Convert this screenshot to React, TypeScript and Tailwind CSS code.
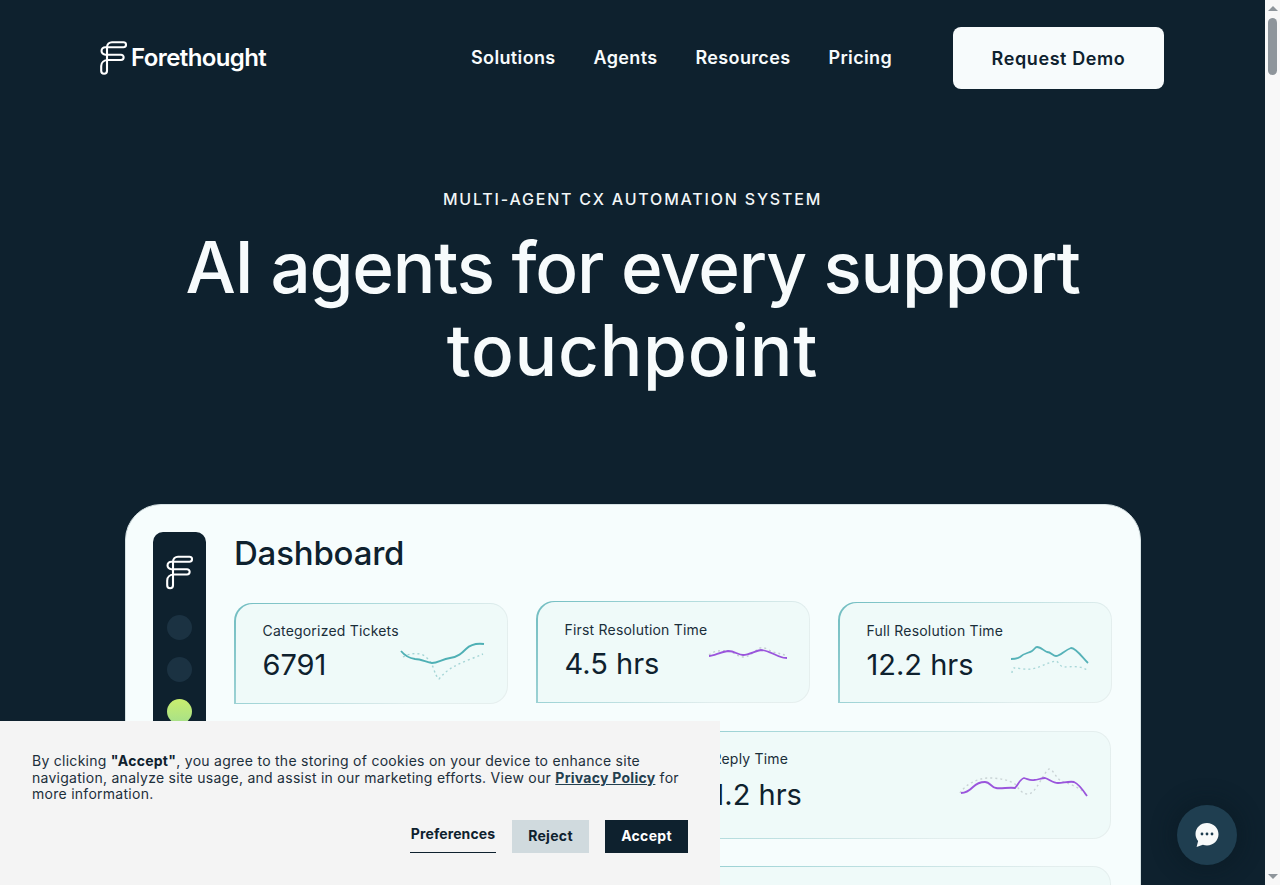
const LOGO_PATH = 'M7 29.8V6A5 5 0 0 1 12 1.2H23.5A2.5 2.5 0 0 1 23.5 6.2H5.3A3.75 3.75 0 0 0 5.3 13.7H21A2.65 2.65 0 0 1 21 19H8C4 19 1.2 21.500 1.2 25V29.800A2.9 2.9 0 0 0 7 29.800Z'

const Logo = ({ className }: { className: string }) => (
  <svg viewBox="0 0 27 35" fill="none" stroke="currentColor" strokeWidth="2.1" className={className}>
    <path d={LOGO_PATH} />
  </svg>
)

type Spark = { line: string; dots: string; color: string; dotColor: string; w: number; h: number; top: string }

const StatCard = ({ title, value, spark, className, padClass }: { title: string; value: string; spark: Spark; className: string; padClass: string }) => (
  <div className={`rounded-[18px] rounded-bl-none bg-[linear-gradient(135deg,#6fbcc0_0%,#a9d8da_35%,#e3eeee_75%,#e6efee_100%)] pb-px pl-[1.5px] pr-px pt-px ${className}`}>
    <div className={`relative flex h-full flex-col rounded-[17px] rounded-bl-none bg-[#effaf9] ${padClass}`}>
      <div className="font-['Inter',sans-serif] text-[14px] leading-[18px] tracking-[0.2px] text-[#1a2e3a]">{title}</div>
      <div className="mt-[7px] font-['Inter',sans-serif] text-[29px] leading-[36px] text-[#0e212e]">{value}</div>
      <svg width={spark.w} height={spark.h} viewBox={`0 0 ${spark.w} ${spark.h}`} fill="none" className={`absolute right-[21px] ${spark.top}`}>
        <path d={spark.dots} stroke={spark.dotColor} strokeWidth="1.4" strokeDasharray="2 3" />
        <path d={spark.line} stroke={spark.color} strokeWidth="1.8" />
      </svg>
    </div>
  </div>
)

const sparks: Record<string, Spark> = {
  tickets: {
    w: 86, h: 40, top: 'top-[36px]', color: '#4fb0b5', dotColor: '#a5d5d6',
    line: 'M1 11C5 16 9 18 15 19C21 19 26 22 32 23C38 23 42 19 50 18C58 17 62 13 66 9C70 5 76 3 84 4',
    dots: 'M3 17C8 14 14 13 20 14C26 15 31 22 33 27C35 33 37 38 39 39C44 33 48 30 53 27C62 22 74 18 83 14',
  },
  first: {
    w: 80, h: 20, top: 'top-[44px]', color: '#9a55dc', dotColor: '#c4cfd2',
    line: 'M1 10C6 10 12 6 20 5C27 5 30 9 35 9C41 9 47 5 53 4C60 4 66 9 73 11C75 12 77 12 79 12',
    dots: 'M1 9C6 5 12 4 20 5C26 6 30 11 36 11C42 10 46 6 50 3C54 0 60 3 64 6C70 7 74 8 79 10',
  },
  full: {
    w: 80, h: 32, top: 'top-[41px]', color: '#56b2b8', dotColor: '#a9d7d8',
    line: 'M1 15C4 15 7 15 10 13C14 9 19 9 22 7C25 5 25 3 27 3C31 3 34 7 37 8C41 8 43 12 46 12C50 12 55 6 61 4C66 4 72 13 78 19',
    dots: 'M2 29C2 26 3 24 4 24C9 24 16 26 21 25C30 24 38 18 46 17C49 18 50 23 54 23C60 23 70 21 77 26',
  },
  reply: {
    w: 130, h: 32, top: 'top-[35px]', color: '#9a55dc', dotColor: '#c9d3d5',
    line: 'M2 26C7 26 10 24 14 20C18 16 22 15 26 15C31 15 33 21 37 21C42 22 50 20 56 21C59 18 61 12 65 11C69 12 71 14 75 13C79 13 82 11 86 11C90 12 94 16 99 16C104 16 110 14 115 15C120 17 124 23 128 29',
    dots: 'M1 26C6 18 18 11 30 11C40 11 50 13 56 17C60 22 63 27 69 27C77 27 84 6 90 2C94 2 97 11 102 14C110 17 122 20 128 29',
  },
}

const NavLink = ({ label }: { label: string }) => (
  <a className="font-['Inter',sans-serif] text-[18px] font-semibold leading-[24px] tracking-[0.35px] text-[#f7fbfc]">{label}</a>
)

export default function App() {
  return (
    <div className="relative flex h-[885px] w-[1280px] overflow-hidden bg-[#f8f8f8]">
      <main className="h-full w-[1265px] shrink-0 overflow-hidden bg-[#0e212e]">
        {/* header */}
        <header className="flex items-center justify-between pl-[100px] pr-[101px] pt-[27px]">
          <div className="flex items-center gap-[4px] text-white">
            <Logo className="h-[35px] w-[27px]" />
            <span className="font-['Inter',sans-serif] text-[24px] font-semibold leading-[30px] tracking-[-0.6px]">Forethought</span>
          </div>
          <div className="flex items-center">
            <nav className="flex items-center gap-[38px]">
              <NavLink label="Solutions" />
              <NavLink label="Agents" />
              <NavLink label="Resources" />
              <NavLink label="Pricing" />
            </nav>
            <button className="ml-[61px] h-[62px] w-[211px] rounded-[8px] bg-[#f7fbfc] font-['Inter',sans-serif] text-[18px] font-semibold tracking-[0.6px] text-[#0e212e]">
              Request Demo
            </button>
          </div>
        </header>

        {/* hero */}
        <section className="pt-[100px] text-center">
          <div className="font-['Inter',sans-serif] text-[16px] font-medium leading-[20px] tracking-[1.8px] text-[#f2f6f7]">
            MULTI-AGENT CX AUTOMATION SYSTEM
          </div>
          <h1 className="mt-[17px] font-['Inter',sans-serif] text-[71px] font-medium leading-[83px] tracking-[-1.2px] text-[#f7fbfc]">
            AI agents for every support<br /><span className="tracking-[0.7px]">touchpoint</span>
          </h1>
        </section>

        {/* dashboard mockup */}
        <section className="ml-[125px] mt-[112px] flex h-[500px] w-[1016px] gap-[28px] rounded-[36px] border border-[#d6e2e4] bg-[#f6fdfd] pl-[27px] pt-[26px]">
          <aside className="mt-px flex h-[300px] w-[53px] shrink-0 flex-col items-center rounded-[10px] bg-[#0e212e] pt-[23px]">
            <Logo className="h-[36px] w-[27px] text-white" />
            <div className="mt-[24px] h-[25px] w-[25px] rounded-full bg-[#1b3242]" />
            <div className="mt-[17px] h-[25px] w-[25px] rounded-full bg-[#1b3242]" />
            <div className="mt-[17px] h-[25px] w-[25px] rounded-full bg-[linear-gradient(180deg,#c9ee6e,#a6e08a)]" />
          </aside>
          <div className="flex-1">
            <h2 className="font-['Inter',sans-serif] text-[33px] font-medium leading-[44px] tracking-[-0.2px] text-[#0e212e]">Dashboard</h2>
            <div className="mt-[27px] flex items-start gap-[28px]">
              <StatCard className="mt-px h-[101px] w-[274px]" padClass="pl-[27px] pt-[18px]" title="Categorized Tickets" value="6791" spark={sparks.tickets} />
              <StatCard className="-mt-px h-[102px] w-[274px]" padClass="gap-0 pl-[27px] pt-[19px]" title="First Resolution Time" value="4.5 hrs" spark={sparks.first} />
              <StatCard className="h-[101px] w-[274px]" padClass="pl-[27px] pt-[19px]" title="Full Resolution Time" value="12.2 hrs" spark={sparks.full} />
            </div>
            <div className="ml-[302px] mt-[27px] flex flex-col gap-[27px]">
              <StatCard className="h-[108px] w-[575px]" padClass="gap-[2px] pl-[175px] pt-[18px]" title="Reply Time" value="1.2 hrs" spark={sparks.reply} />
              <StatCard className="h-[108px] w-[575px]" padClass="pl-[175px] pt-[19px]" title="" value="" spark={{ ...sparks.reply, line: '', dots: '' }} />
            </div>
          </div>
        </section>
      </main>

      {/* scrollbar */}
      <div className="flex w-[15px] shrink-0 flex-col items-center bg-[#f8f8f8] pt-[6px]">
        <div className="h-0 w-0 border-x-[5px] border-b-[5px] border-x-transparent border-b-[#8e959b]" />
        <div className="mt-[7px] h-[57px] w-[9px] rounded-[5px] bg-[#8e959b]" />
        <div className="mb-[6px] mt-auto h-0 w-0 border-x-[5px] border-t-[5px] border-x-transparent border-t-[#8e959b]" />
      </div>

      {/* cookie banner */}
      <div className="absolute bottom-0 left-0 h-[164px] w-[720px] bg-[#f4f4f4] pl-[32px] pr-[32px] pt-[32px]">
        <p className="font-['Inter',sans-serif] text-[14px] leading-[16.5px] tracking-[0.27px] text-[#1c2f3b]">
          By clicking <strong className="font-bold text-[#0e212e]">"Accept"</strong>, you agree to the storing of cookies on your device to enhance site navigation, analyze site usage, and assist in our marketing efforts. View our <a className="font-bold text-[#24404f] underline">Privacy Policy</a> for more information.
        </p>
        <div className="mt-[17px] flex items-start justify-end gap-[16px]">
          <button className="h-[33px] w-[86px] border-b border-[#0e212e] pb-[4px] font-['Inter',sans-serif] text-[14px] font-bold tracking-[0.1px] text-[#0e212e]">Preferences</button>
          <button className="h-[33px] w-[77px] bg-[#d0dade] pb-px font-['Inter',sans-serif] text-[14px] font-bold tracking-[0.3px] text-[#0e212e]">Reject</button>
          <button className="h-[33px] w-[83px] bg-[#0e212e] pb-px font-['Inter',sans-serif] text-[14px] font-bold tracking-[0.3px] text-white">Accept</button>
        </div>
      </div>

      {/* chat launcher */}
      <div className="absolute bottom-[20px] left-[1177px] flex h-[60px] w-[60px] items-center justify-center rounded-full bg-[#1f3e50] shadow-[0_0_20px_6px_rgba(8,24,34,0.45)]">
        <svg width="24" height="26" viewBox="0 0 24 26">
          <path d="M12 1C5.6 1 .5 5.8.5 12c0 2.7 1 5.2 2.6 7.1L1.600 25l6.300-2.300c1.300.5 2.700.7 4.100.7 6.400 0 11.500-5 11.500-11.200S18.400 1 12 1Z" fill="#f8fafa" />
          <circle cx="7" cy="12" r="1.4" fill="#1f3e50" />
          <circle cx="12" cy="12" r="1.4" fill="#1f3e50" />
          <circle cx="17" cy="12" r="1.4" fill="#1f3e50" />
        </svg>
      </div>
    </div>
  )
}
